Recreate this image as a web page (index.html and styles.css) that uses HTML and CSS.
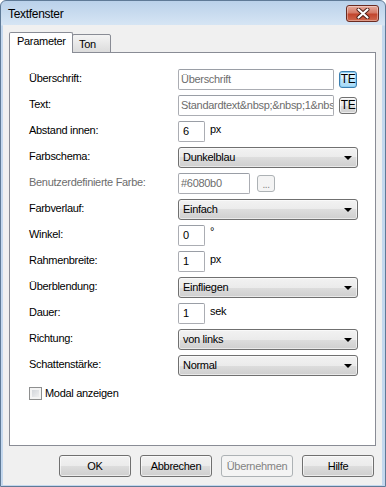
FILE: index.html
```html
<!DOCTYPE html>
<html lang="de">
<head>
    <meta charset="UTF-8">
    <meta name="viewport" content="width=device-width, initial-scale=1.0">
    <title>Textfenster</title>
    <link rel="stylesheet" href="styles.css">
</head>
<body>
    <div class="window">
        <div class="titlebar">
            <span class="title">Textfenster</span>
            <div class="close-btn">
                <svg width="14" height="11" viewBox="0 0 14 11">
                    <path d="M2.5 1.5 L11.5 9.5 M11.5 1.5 L2.5 9.5" stroke="#4a1c14" stroke-width="4" stroke-linecap="round"/>
                    <path d="M2.5 1.5 L11.5 9.5 M11.5 1.5 L2.5 9.5" stroke="#ffffff" stroke-width="2.2" stroke-linecap="round"/>
                </svg>
            </div>
        </div>

        <div class="client">
            <div class="tabs">
                <div class="tab active">Parameter</div>
                <div class="tab">Ton</div>
            </div>

            <div class="panel">
                <div class="form">
                    <div class="label">Überschrift:</div>
                    <div class="field">
                        <div class="textbox wide muted">Überschrift</div>
                        <div class="btn mini focus">TE</div>
                    </div>

                    <div class="label">Text:</div>
                    <div class="field">
                        <div class="textbox wide muted">Standardtext&amp;nbsp;&amp;nbsp;1&amp;nbs</div>
                        <div class="btn mini">TE</div>
                    </div>

                    <div class="label">Abstand innen:</div>
                    <div class="field">
                        <div class="textbox num">6</div>
                        <span class="unit">px</span>
                    </div>

                    <div class="label">Farbschema:</div>
                    <div class="field">
                        <div class="combo">Dunkelblau<span class="arrow"></span></div>
                    </div>

                    <div class="label disabled">Benutzerdefinierte Farbe:</div>
                    <div class="field">
                        <div class="textbox color muted">#6080b0</div>
                        <div class="btn mini dots disabled">...</div>
                    </div>

                    <div class="label">Farbverlauf:</div>
                    <div class="field">
                        <div class="combo">Einfach<span class="arrow"></span></div>
                    </div>

                    <div class="label">Winkel:</div>
                    <div class="field">
                        <div class="textbox num">0</div>
                        <span class="unit deg">°</span>
                    </div>

                    <div class="label">Rahmenbreite:</div>
                    <div class="field">
                        <div class="textbox num">1</div>
                        <span class="unit">px</span>
                    </div>

                    <div class="label">Überblendung:</div>
                    <div class="field">
                        <div class="combo">Einfliegen<span class="arrow"></span></div>
                    </div>

                    <div class="label">Dauer:</div>
                    <div class="field">
                        <div class="textbox num">1</div>
                        <span class="unit">sek</span>
                    </div>

                    <div class="label">Richtung:</div>
                    <div class="field">
                        <div class="combo">von links<span class="arrow"></span></div>
                    </div>

                    <div class="label">Schattenstärke:</div>
                    <div class="field">
                        <div class="combo">Normal<span class="arrow"></span></div>
                    </div>
                </div>

                <div class="check">
                    <span class="checkbox"></span>
                    <span>Modal anzeigen</span>
                </div>
            </div>

            <div class="buttons">
                <div class="btn">OK</div>
                <div class="btn">Abbrechen</div>
                <div class="btn disabled">Übernehmen</div>
                <div class="btn">Hilfe</div>
            </div>
        </div>
    </div>
</body>
</html>
```

FILE: styles.css
```css
* {
    margin: 0;
    padding: 0;
    box-sizing: border-box;
}

body {
    font-family: "Liberation Sans", Arial, sans-serif;
    font-size: 11px;
    line-height: 13px;
    letter-spacing: -0.3px;
    color: #000000;
    background: #ffffff;
}

.window {
    width: 386px;
    height: 487px;
    border: 1px solid #5f7a97;
    border-radius: 6px 6px 0 0;
    background: linear-gradient(to bottom, #bad1ea 0, #d6e5f4 24px, #c4d8ee 25px, #c4d8ee 100%);
    display: flex;
    flex-direction: column;
}

.titlebar {
    height: 24px;
    display: flex;
    justify-content: space-between;
    align-items: flex-start;
    padding: 0 6px 0 7px;
}

.title {
    font-size: 12px;
    line-height: 15px;
    margin-top: 6px;
}

.close-btn {
    width: 33px;
    height: 17px;
    margin-top: 4px;
    border: 1px solid #6b2b21;
    border-radius: 3px;
    background: linear-gradient(to bottom, #e6aa9c 0%, #d57a66 45%, #c2452d 55%, #d0694e 100%);
    box-shadow: inset 0 0 0 1px rgba(255, 255, 255, 0.35);
    display: flex;
    align-items: center;
    justify-content: center;
}

.client {
    margin: 0 3px 1px 2px;
    height: 460px;
    background: #f0f0f0;
    padding: 7px 6px 0;
}

/* tabs */

.tabs {
    display: flex;
    align-items: flex-end;
    height: 21px;
    margin-bottom: -1px;
    position: relative;
    z-index: 1;
}

.tab {
    height: 19px;
    width: 39px;
    margin-left: -1px;
    padding: 3px 0 0 6px;
    border: 1px solid #898c95;
    border-radius: 2px 2px 0 0;
    background: linear-gradient(to bottom, #f4f4f4, #dcdcdc);
}

.tab.active {
    height: 21px;
    width: 64px;
    margin-left: 0;
    padding: 2px 0 0 7px;
    border-bottom: none;
    background: #ffffff;
    position: relative;
    z-index: 1;
}

.panel {
    height: 394px;
    background: #ffffff;
    border: 1px solid #898c95;
    padding: 16px 0 0 19px;
}

/* form grid */

.form {
    display: grid;
    grid-template-columns: 149px auto;
    grid-auto-rows: 21px;
    row-gap: 5px;
}

.label {
    padding-top: 3px;
}

.label.disabled {
    color: #6d6d6d;
}

.field {
    display: flex;
    align-items: flex-start;
}

.textbox {
    height: 21px;
    padding: 3px 2px 0;
    border: 1px solid #abadb3;
    border-top-color: #9a9ea6;
    border-radius: 2px;
    background: #ffffff;
    white-space: nowrap;
    overflow: hidden;
}

.textbox.wide {
    width: 156px;
}

.textbox.num {
    width: 27px;
    padding-left: 4px;
}

.textbox.color {
    width: 72px;
}

.textbox.muted {
    color: #6d6d6d;
}

.unit {
    margin-left: 5px;
    padding-top: 2px;
}

.unit.deg {
    padding-top: 0;
}

.combo {
    width: 180px;
    height: 21px;
    padding: 3px 0 0 4px;
    border: 1px solid #707070;
    border-radius: 3px;
    background: linear-gradient(to bottom, #f2f2f2 0%, #ebebeb 50%, #dddddd 50%, #cfcfcf 100%);
    box-shadow: inset 0 0 0 1px rgba(255, 255, 255, 0.55);
    display: flex;
    justify-content: space-between;
}

.arrow {
    width: 0;
    height: 0;
    margin: 5px 5px 0 0;
    border-left: 4px solid transparent;
    border-right: 4px solid transparent;
    border-top: 4px solid #000000;
}

/* buttons */

.btn {
    width: 72px;
    height: 22px;
    padding-top: 4px;
    text-align: center;
    border: 1px solid #707070;
    border-radius: 3px;
    background: linear-gradient(to bottom, #f2f2f2 0%, #ebebeb 50%, #dddddd 50%, #cfcfcf 100%);
    box-shadow: inset 0 0 0 1px rgba(255, 255, 255, 0.6);
}

.btn.disabled {
    color: #838383;
    border-color: #adb2b5;
    background: #f4f4f4;
    box-shadow: none;
}

.btn.mini {
    width: 18px;
    height: 17px;
    margin: 2px 0 0 5px;
    padding-top: 1px;
    font-size: 12px;
    letter-spacing: -0.5px;
}

.btn.mini.focus {
    border-color: #3c7fb1;
    background: linear-gradient(to bottom, #eaf6fd 0%, #d9f0fc 50%, #bee6fd 50%, #a7d9f5 100%);
    box-shadow: inset 0 0 0 1px #8fd0f4;
}

.btn.dots {
    margin-left: 7px;
    font-size: 10px;
    padding-top: 2px;
}

.buttons {
    display: flex;
    justify-content: flex-end;
    gap: 9px;
    margin-top: 9px;
    padding-right: 2px;
}

/* checkbox */

.check {
    display: flex;
    align-items: center;
    gap: 3px;
    margin-top: 11px;
}

.checkbox {
    width: 13px;
    height: 13px;
    border: 1px solid #8e8f8f;
    background: linear-gradient(135deg, #cbcfd5, #f6f6f6);
    box-shadow: inset 0 0 0 2px #f4f4f4;
}
```
